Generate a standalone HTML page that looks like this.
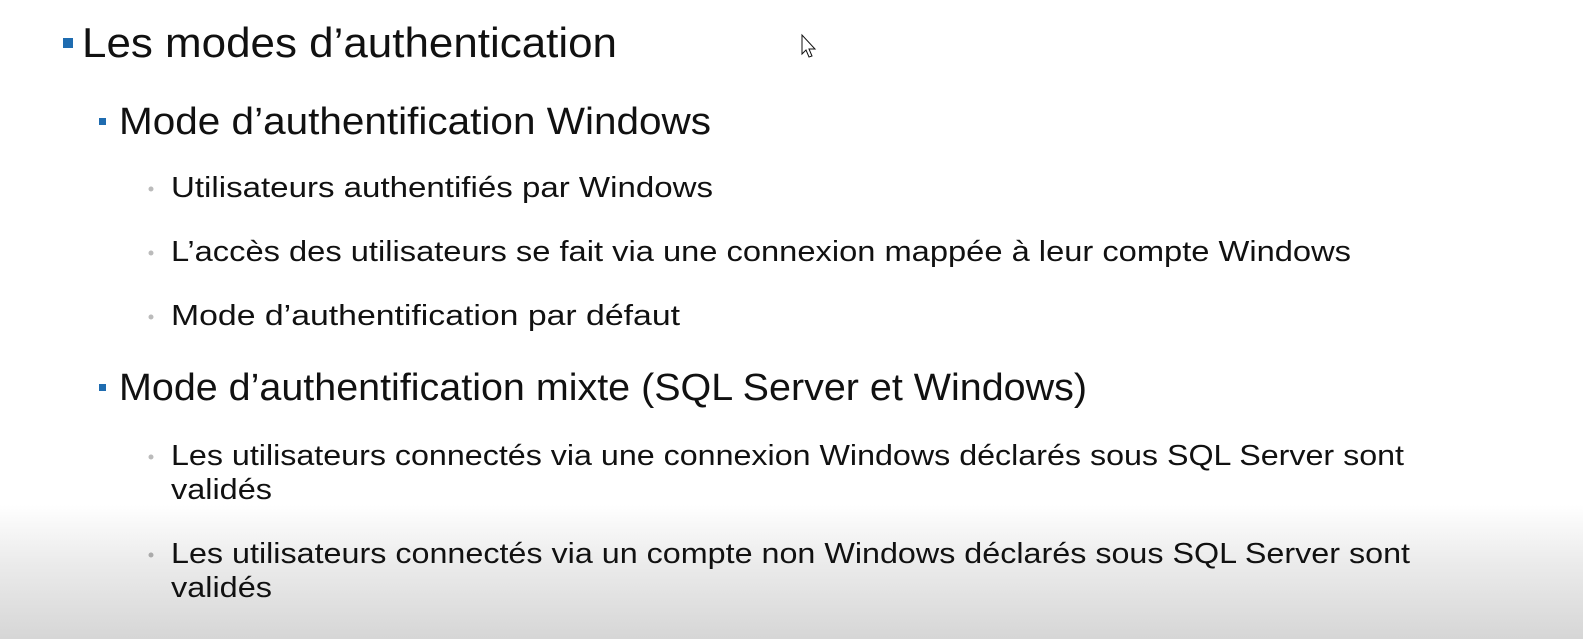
<!DOCTYPE html>
<html><head><meta charset="utf-8"><style>
html,body{margin:0;padding:0;}
body{width:1583px;height:639px;overflow:hidden;background:linear-gradient(to bottom,#fff 0,#fff 505px,#ececec 560px,#d6d6d6 639px);}
svg{position:absolute;left:0;top:0;}
text{font-family:"Liberation Sans",sans-serif;fill:#111;}
</style></head><body>
<svg width="1583" height="639" viewBox="0 0 1583 639">
<rect x="63" y="38" width="10" height="10" fill="#1f6cb0"/>
<text x="82" y="57" font-size="42" textLength="535" lengthAdjust="spacingAndGlyphs">Les modes d’authentication</text>
<rect x="99" y="118" width="7" height="7" fill="#1f6cb0"/>
<text x="119" y="134" font-size="38" textLength="592" lengthAdjust="spacingAndGlyphs">Mode d’authentification Windows</text>
<circle cx="151" cy="189" r="2.5" fill="#bbb"/>
<text x="171" y="197" font-size="29" textLength="542" lengthAdjust="spacingAndGlyphs">Utilisateurs authentifiés par Windows</text>
<circle cx="151" cy="253" r="2.5" fill="#bbb"/>
<text x="171" y="261" font-size="29" textLength="1180" lengthAdjust="spacingAndGlyphs">L’accès des utilisateurs se fait via une connexion mappée à leur compte Windows</text>
<circle cx="151" cy="317" r="2.5" fill="#bbb"/>
<text x="171" y="325" font-size="29" textLength="509" lengthAdjust="spacingAndGlyphs">Mode d’authentification par défaut</text>
<rect x="99" y="384" width="7" height="7" fill="#1f6cb0"/>
<text x="119" y="400" font-size="38" textLength="968" lengthAdjust="spacingAndGlyphs">Mode d’authentification mixte (SQL Server et Windows)</text>
<circle cx="151" cy="457" r="2.5" fill="#bbb"/>
<text x="171" y="465" font-size="29" textLength="1233" lengthAdjust="spacingAndGlyphs">Les utilisateurs connectés via une connexion Windows déclarés sous SQL Server sont</text>
<text x="171" y="499" font-size="29" textLength="101" lengthAdjust="spacingAndGlyphs">validés</text>
<circle cx="151" cy="555" r="2.5" fill="#aaa"/>
<text x="171" y="563" font-size="29" textLength="1239" lengthAdjust="spacingAndGlyphs">Les utilisateurs connectés via un compte non Windows déclarés sous SQL Server sont</text>
<text x="171" y="597" font-size="29" textLength="101" lengthAdjust="spacingAndGlyphs">validés</text>
<path d="M802 35 L802 54 L806 50 L809 57 L812 56 L809 49 L815 49 Z" fill="#fff" stroke="#111" stroke-width="1"/>
</svg>
</body></html>
